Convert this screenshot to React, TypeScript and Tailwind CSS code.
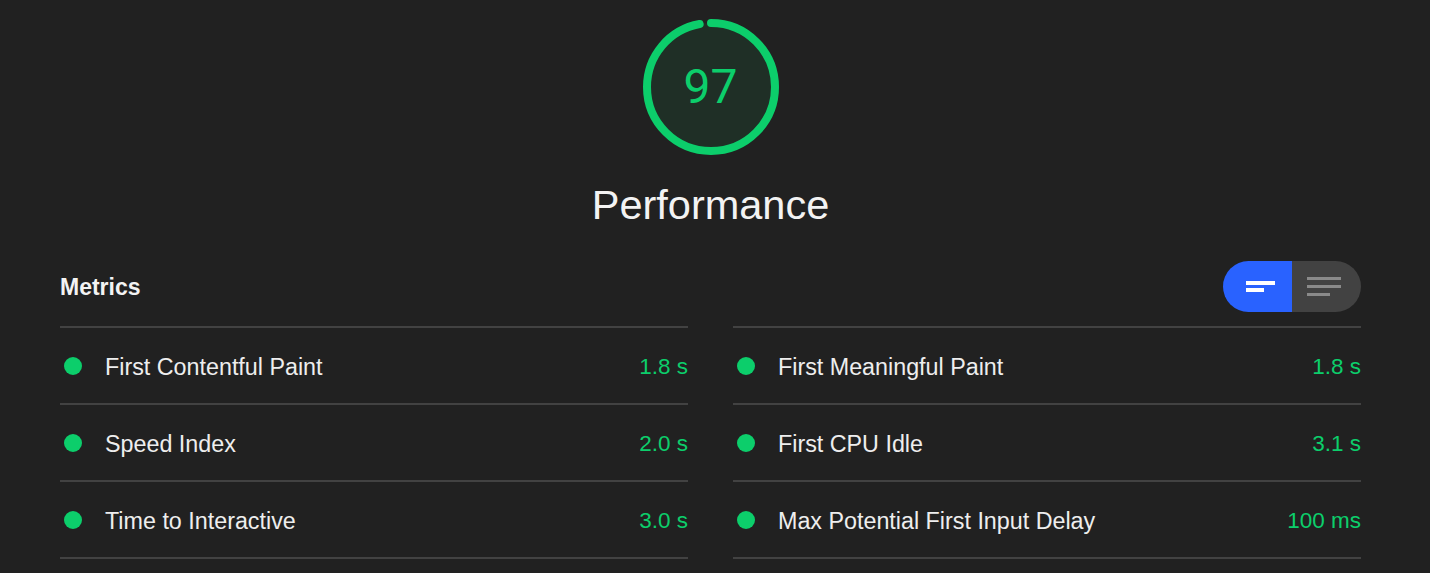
import React from "react";

const left = [
  { label: "First Contentful Paint", value: "1.8 s" },
  { label: "Speed Index", value: "2.0 s" },
  { label: "Time to Interactive", value: "3.0 s" },
];
const right = [
  { label: "First Meaningful Paint", value: "1.8 s" },
  { label: "First CPU Idle", value: "3.1 s" },
  { label: "Max Potential First Input Delay", value: "100 ms" },
];

function Column({ items }: { items: { label: string; value: string }[] }) {
  return (
    <div className="flex flex-col">
      {items.map((m) => (
        <div
          key={m.label}
          className="flex items-center h-[77px] border-t-2 border-[#424242] pt-[3px]"
        >
          <span className="w-[18px] h-[18px] rounded-full bg-[#0cce6b] ml-[4px] mr-[23px] mb-[2px]" />
          <span className="flex-1 text-[23.3px] text-[#eeeeee]">{m.label}</span>
          <span className="text-[22.5px] text-[#0cce6b]">{m.value}</span>
        </div>
      ))}
      <div className="border-t-2 border-[#424242]" />
    </div>
  );
}

export default function App() {
  const r = 64;
  const c = 2 * Math.PI * r;
  return (
    <div
      className="w-[1430px] h-[573px] bg-[#212121] overflow-hidden"
      style={{ fontFamily: '"Liberation Sans", Arial, sans-serif' }}
    >
      <div className="ml-[60px] w-[1301px] flex flex-col">
        <div className="flex flex-col items-center pt-[19px]">
          <div className="relative w-[136px] h-[136px]">
            <svg width="136" height="136" viewBox="0 0 136 136">
              <circle cx="68" cy="68" r={r} fill="#1f2f26" />
              <circle
                cx="68"
                cy="68"
                r={r}
                fill="none"
                stroke="#0cce6b"
                strokeWidth="8"
                strokeLinecap="round"
                strokeDasharray={`${0.97 * c} ${c}`}
                transform="rotate(-90 68 68)"
              />
            </svg>
            <div
              className="absolute inset-0 flex items-center justify-center text-[48px] text-[#0cce6b]"
              style={{ fontFamily: 'Roboto, "Liberation Sans", sans-serif' }}
            >
              97
            </div>
          </div>
          <div className="mt-[26px] text-[41.5px] leading-[48px] text-[#f3f3f3]">
            Performance
          </div>
        </div>
        <div className="flex items-center justify-between h-[51px] mt-[32px] mb-[14px]">
          <span className="text-[23px] font-bold text-[#f3f3f3] pt-[2px]">Metrics</span>
          <div className="flex h-[51px] w-[138px] rounded-full overflow-hidden">
            <div className="w-[69px] bg-[#2962ff] flex flex-col justify-center pl-[23px] gap-[3px]">
              <span className="block w-[29px] h-[4px] bg-white" />
              <span className="block w-[18px] h-[4px] bg-white" />
            </div>
            <div className="w-[69px] bg-[#424242] flex flex-col justify-center pl-[15px] gap-[5px]">
              <span className="block w-[34px] h-[3px] bg-[#8a8a8a]" />
              <span className="block w-[34px] h-[3px] bg-[#8a8a8a]" />
              <span className="block w-[23px] h-[3px] bg-[#8a8a8a]" />
            </div>
          </div>
        </div>
        <div className="grid grid-cols-2 gap-x-[45px]">
          <Column items={left} />
          <Column items={right} />
        </div>
      </div>
    </div>
  );
}
